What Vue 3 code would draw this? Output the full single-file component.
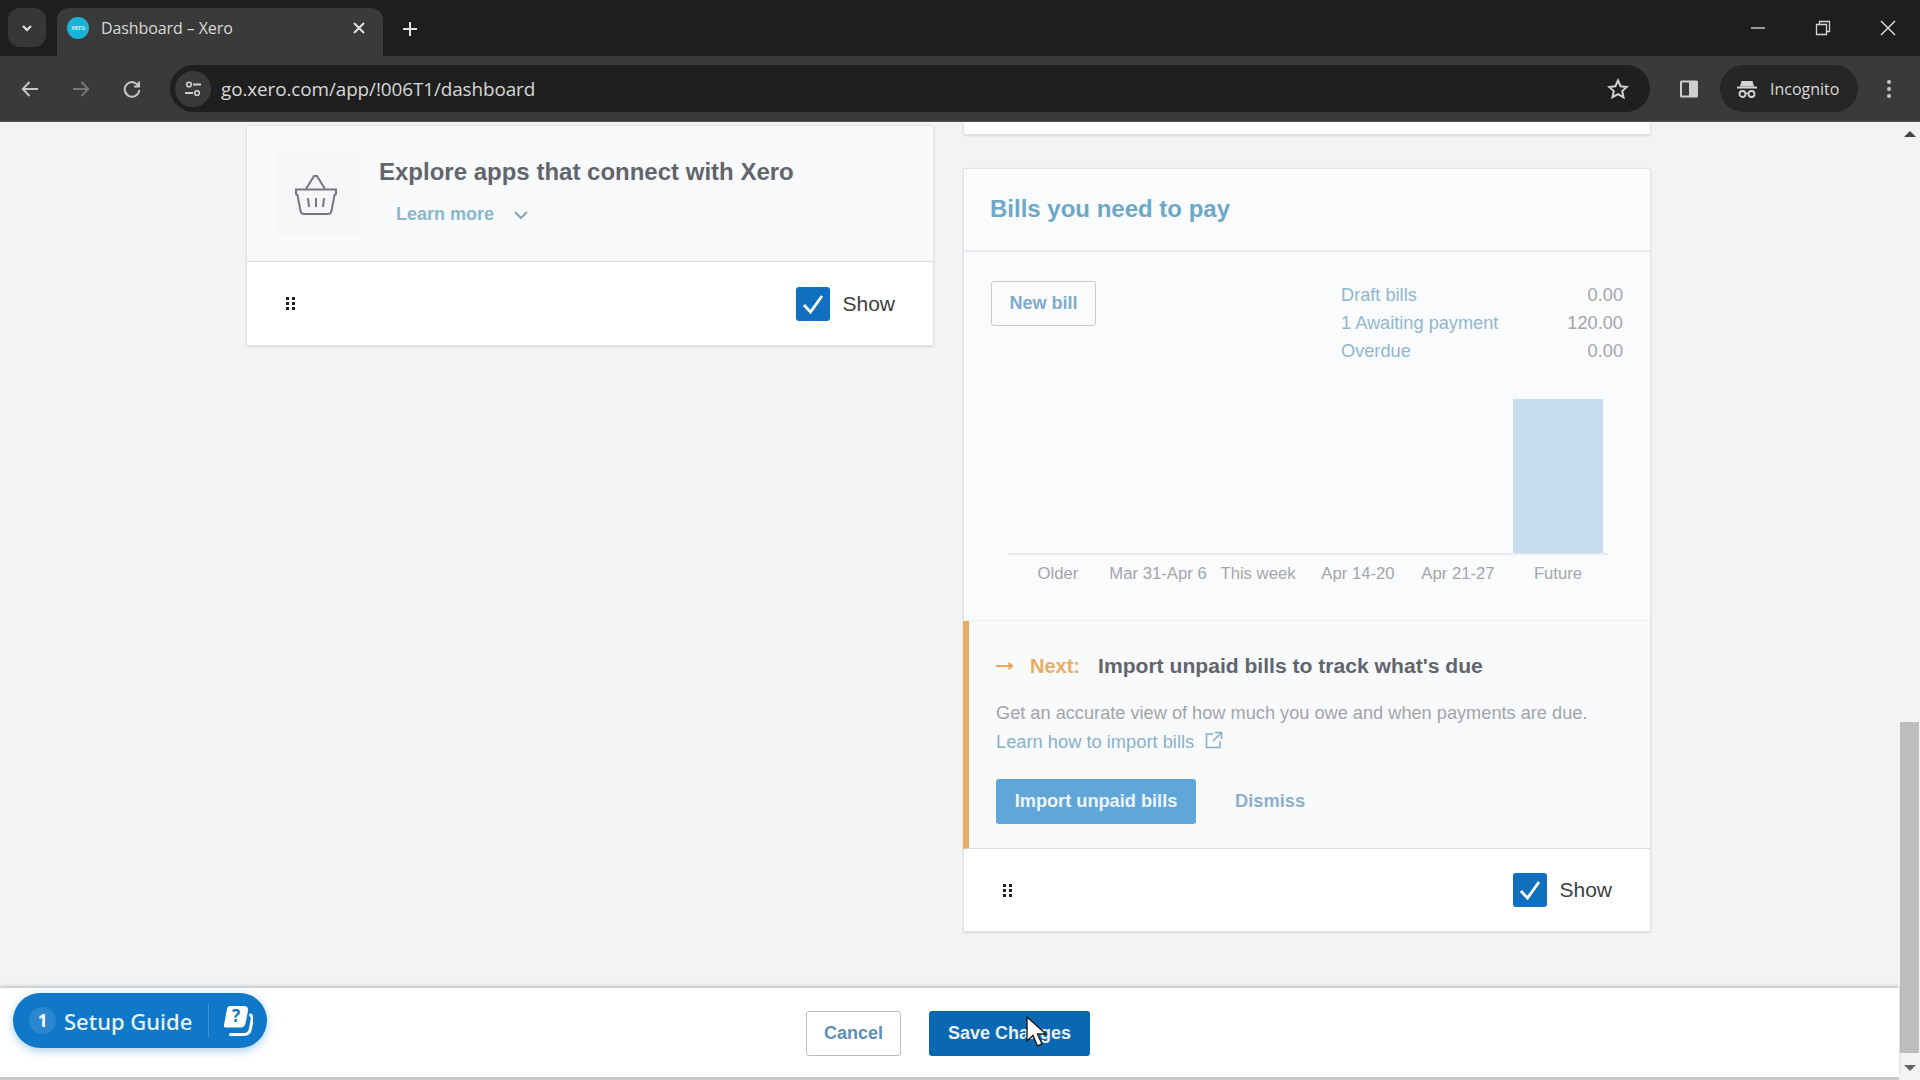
<template>
  <div class="page">
    <div class="tabstrip">
      <button class="tab-menu">
        <svg width="14" height="14" viewBox="0 0 14 14"><path d="M3 5l4 4 4-4" fill="none" stroke="#e4e4e4" stroke-width="2" /></svg>
      </button>
      <div class="tab">
        <span class="favicon">xero</span>
        <span class="tab-title">Dashboard – Xero</span>
        <svg class="tab-close" width="14" height="14" viewBox="0 0 14 14"><path d="M2 2l10 10M12 2L2 12" stroke="#e2e2e2" stroke-width="2" /></svg>
      </div>
      <svg class="tab-new" width="18" height="18" viewBox="0 0 18 18"><path d="M9 2v14M2 9h14" stroke="#e2e2e2" stroke-width="2" /></svg>
      <div class="win-btns">
        <svg width="16" height="16" viewBox="0 0 16 16"><path d="M1 8h14" stroke="#cfcfcf" stroke-width="1.4" /></svg>
        <svg width="16" height="16" viewBox="0 0 16 16"><path d="M1.5 4.5h10v10h-10zM4.5 4V1.5h10v10H12" fill="none" stroke="#d5d5d5" stroke-width="1.3" /></svg>
        <svg width="16" height="16" viewBox="0 0 16 16"><path d="M1 1l14 14M15 1L1 15" stroke="#e4e4e4" stroke-width="1.4" /></svg>
      </div>
    </div>

    <div class="toolbar">
      <svg class="nav-icon" width="20" height="20" viewBox="0 0 20 20"><path d="M18 10H3M9.5 3L2.800 10l6.700 7" fill="none" stroke="#c6c6c6" stroke-width="2" /></svg>
      <svg class="nav-icon" width="20" height="20" viewBox="0 0 20 20"><path d="M2 10h15M10.500 3l6.700 7-6.700 7" fill="none" stroke="#777" stroke-width="2" /></svg>
      <svg class="nav-icon" width="20" height="20" viewBox="0 0 20 20"><path d="M16.500 7A7.300 7.300 0 1 0 17.300 11M17 2.500V7.500H12" fill="none" stroke="#c6c6c6" stroke-width="2" /></svg>
      <div class="omnibox">
        <span class="site-btn">
          <svg width="20" height="20" viewBox="0 0 20 20">
            <circle cx="6" cy="5.500" r="2.300" fill="none" stroke="#d2d2d2" stroke-width="1.600" />
            <path d="M10 5.500h8M2 14h8" stroke="#d2d2d2" stroke-width="1.800" />
            <circle cx="14" cy="14" r="2.300" fill="none" stroke="#d2d2d2" stroke-width="1.600" />
          </svg>
        </span>
        <span class="url">go.xero.com/app/!006T1/dashboard</span>
        <svg class="star" width="22" height="22" viewBox="0 0 22 22"><path d="M11 2.500l2.600 5.700 6.200.7-4.600 4.200 1.300 6.100L11 16.100l-5.500 3.100 1.300-6.100-4.600-4.200 6.200-.7z" fill="none" stroke="#d0d0d0" stroke-width="2" /></svg>
      </div>
      <svg class="side-panel" width="20" height="20" viewBox="0 0 20 20"><rect x="1" y="1.500" width="18" height="17" rx="1.500" fill="#cfcfcf" /><rect x="3" y="3.500" width="7" height="13" fill="#3a3a3a" /></svg>
      <div class="incognito">
        <svg width="22" height="22" viewBox="0 0 22 22">
          <path d="M5.500 3h11l1.500 5.500H4z" fill="#d5d5d5" />
          <path d="M1 9.500h20" stroke="#d5d5d5" stroke-width="2" />
          <circle cx="6.500" cy="16" r="3" fill="none" stroke="#d5d5d5" stroke-width="1.800" />
          <circle cx="15.500" cy="16" r="3" fill="none" stroke="#d5d5d5" stroke-width="1.800" />
          <path d="M9.500 15.500h3" stroke="#d5d5d5" stroke-width="1.500" />
        </svg>
        <span>Incognito</span>
      </div>
      <svg class="dots" width="6" height="22" viewBox="0 0 6 22"><circle cx="3" cy="4" r="2" fill="#c8c8c8" /><circle cx="3" cy="11" r="2" fill="#c8c8c8" /><circle cx="3" cy="18" r="2" fill="#c8c8c8" /></svg>
    </div>

    <div class="viewport">
      <div class="main">
        <div class="board">
          <div class="col">
            <section class="card apps-card">
              <div class="apps-head">
                <div class="basket-tile">
                  <svg width="46" height="44" viewBox="0 0 46 44" fill="none" stroke="#74777c" stroke-width="2">
                    <path d="M13 16L21 3h3l8 13" />
                    <path d="M3 16.500h40v4c0 1-1 1.500-1.500 1.500L38.500 38c-.4 2-1.500 3-3.500 3H11c-2 0-3.100-1-3.500-3L4.500 22C4 22 3 21.500 3 20.500z" />
                    <path d="M15 25l1 9M23 25v9M31 25l-1 9" />
                  </svg>
                </div>
                <div class="apps-text">
                  <h3 class="apps-title">Explore apps that connect with Xero</h3>
                  <a class="learn-more">
                    Learn more
                    <svg width="16" height="10" viewBox="0 0 16 10"><path d="M2 2l6 6 6-6" fill="none" stroke="#84a9be" stroke-width="2.200" /></svg>
                  </a>
                </div>
              </div>
              <div class="card-foot">
                <span class="grip"><i v-for="n in 6" :key="n"></i></span>
                <label class="show">
                  <span class="check">
                    <svg width="24" height="22" viewBox="0 0 24 22"><path d="M3 12l6.500 7L21 3" fill="none" stroke="#fff" stroke-width="2.800" /></svg>
                  </span>
                  Show
                </label>
              </div>
            </section>
          </div>

          <div class="col">
            <div class="card prev-card"></div>
            <section class="card bills-card">
              <div class="bills-head">
                <h3 class="bills-title">Bills you need to pay</h3>
              </div>
              <div class="bills-body">
                <div class="bills-top">
                  <button class="new-bill">New bill</button>
                  <div class="summary">
                    <div v-for="row in summary" :key="row.label" class="summary-row">
                      <span class="summary-label">{{ row.label }}</span>
                      <span class="summary-value">{{ row.value }}</span>
                    </div>
                  </div>
                </div>
                <div class="chart">
                  <div class="plot">
                    <div v-for="col in chart" :key="col.label" class="plot-col">
                      <div class="bar" :style="{ height: col.height + 'px' }"></div>
                    </div>
                  </div>
                  <div class="axis-labels">
                    <span v-for="col in chart" :key="col.label">{{ col.label }}</span>
                  </div>
                </div>
              </div>
              <div class="next">
                <div class="next-title">
                  <svg width="18" height="12" viewBox="0 0 18 12"><path d="M0 6h16M12.500 3l3.500 3-3.500 3" fill="none" stroke="#e9a65c" stroke-width="2.200" /></svg>
                  <span class="next-word">Next:</span>
                  <span class="next-text">Import unpaid bills to track what's due</span>
                </div>
                <p class="next-desc">Get an accurate view of how much you owe and when payments are due.</p>
                <a class="next-link">
                  Learn how to import bills
                  <svg width="18" height="18" viewBox="0 0 18 18" fill="none" stroke="#84aec8" stroke-width="1.500"><path d="M8 3H1.500v13.500H15V10M10 1.500h6.500V8M16.500 1.500L8 10" /></svg>
                </a>
                <div class="next-actions">
                  <button class="import-btn">Import unpaid bills</button>
                  <a class="dismiss">Dismiss</a>
                </div>
              </div>
              <div class="card-foot bills-foot">
                <span class="grip"><i v-for="n in 6" :key="n"></i></span>
                <label class="show">
                  <span class="check">
                    <svg width="24" height="22" viewBox="0 0 24 22"><path d="M3 12l6.500 7L21 3" fill="none" stroke="#fff" stroke-width="2.800" /></svg>
                  </span>
                  Show
                </label>
              </div>
            </section>
          </div>
        </div>

        <div class="save-bar">
          <button class="cancel">Cancel</button>
          <button class="save">Save Changes</button>
        </div>
        <div class="below"></div>
      </div>

      <div class="scrollbar">
        <svg class="arrow" width="16" height="8" viewBox="0 0 16 8"><path d="M8 1l6 6H2z" fill="#444" /></svg>
        <div class="track"><div class="thumb"></div></div>
        <svg class="arrow" width="16" height="8" viewBox="0 0 16 8"><path d="M2 1h12L8 7z" fill="#666" /></svg>
      </div>

      <div class="setup-guide">
        <span class="setup-count">1</span>
        <span class="setup-label">Setup Guide</span>
        <span class="setup-sep"></span>
        <svg width="30" height="32" viewBox="0 0 30 32">
          <path d="M7 1h14c3 0 4.500 2 4 4.500l-2.500 13c-.5 2.500-2.500 4-5 4H3c-1.500 0-2.500-1-2-2.500L4 4c.4-2 1.500-3 3-3z" fill="#fff" />
          <text x="13" y="17" text-anchor="middle" class="setup-q">?</text>
          <path d="M27.500 10c1.500 1 2 2.500 1.600 4.500l-1.500 8.500C27 27 24.500 29.500 21 29.500H7.500" fill="none" stroke="#fff" stroke-width="3" stroke-linecap="round" />
        </svg>
      </div>

      <svg class="cursor" width="26" height="34" viewBox="0 0 26 34">
        <path d="M2 1v24l6-5.500 4.500 10.500 4.500-2-4.500-10H21z" fill="#fff" stroke="#1c1c1c" stroke-width="1.400" />
      </svg>
    </div>
  </div>
</template>

<script setup>
const summary = [
  { label: 'Draft bills', value: '0.00' },
  { label: '1 Awaiting payment', value: '120.00' },
  { label: 'Overdue', value: '0.00' },
]

const chart = [
  { label: 'Older', height: 0 },
  { label: 'Mar 31-Apr 6', height: 0 },
  { label: 'This week', height: 0 },
  { label: 'Apr 14-20', height: 0 },
  { label: 'Apr 21-27', height: 0 },
  { label: 'Future', height: 154 },
]
</script>

<style>
html,
body {
  margin: 0;
  overflow: hidden;
}
</style>

<style scoped>
* {
  box-sizing: border-box;
}
.page {
  width: 1920px;
  height: 1080px;
  display: flex;
  flex-direction: column;
  position: relative;
  overflow: hidden;
  font-family: "Liberation Sans", Arial, sans-serif;
  background: #f2f3f5;
}
h3,
p {
  margin: 0;
}
button {
  font-family: inherit;
  cursor: pointer;
}

/* browser chrome */
.tabstrip {
  height: 56px;
  flex: none;
  background: #1e1e1e;
  display: flex;
  align-items: flex-end;
  padding-left: 8px;
}
.tab-menu {
  width: 38px;
  height: 39px;
  margin-bottom: 9px;
  background: #373737;
  border: 0;
  border-radius: 12px;
  display: flex;
  align-items: center;
  justify-content: center;
  padding: 0;
}
.tab {
  width: 326px;
  height: 48px;
  margin-left: 11px;
  background: #3a3a3a;
  border-radius: 12px 12px 0 0;
  display: flex;
  align-items: center;
  padding: 0 17px 8px 10px;
  color: #d9d9d9;
}
.favicon {
  width: 22px;
  height: 22px;
  border-radius: 50%;
  background: #1ab4d7;
  color: #fff;
  font-size: 7px;
  line-height: 22px;
  text-align: center;
  flex: none;
}
.tab-title {
  margin-left: 12px;
  font-family: "Open Sans", sans-serif;
  font-size: 16px;
  letter-spacing: -0.1px;
  flex: 1;
}
.tab-new {
  margin: 0 0 18px 18px;
}
.win-btns {
  margin-left: auto;
  width: 170px;
  display: flex;
  justify-content: space-between;
  align-items: center;
  padding: 0 24px 0 0;
  margin-bottom: 20px;
}
.toolbar {
  height: 66px;
  flex: none;
  background: #3a3a3a;
  display: flex;
  align-items: center;
  padding-left: 20px;
  border-bottom: 1px solid #555;
}
.nav-icon {
  margin-right: 31px;
}
.omnibox {
  width: 1480px;
  height: 47px;
  margin-left: -3px;
  background: #1f1f1f;
  border-radius: 24px;
  display: flex;
  align-items: center;
  padding: 0 21px 0 5px;
}
.site-btn {
  width: 36px;
  height: 36px;
  border-radius: 50%;
  background: #3a3a3a;
  display: flex;
  align-items: center;
  justify-content: center;
}
.url {
  margin-left: 10px;
  font-family: "Open Sans", sans-serif;
  font-size: 18.900px;
  letter-spacing: -0.1px;
  color: #d8d8d8;
}
.star {
  margin-left: auto;
}
.side-panel {
  margin-left: 29px;
}
.incognito {
  width: 138px;
  height: 47px;
  margin-left: 21px;
  background: #262626;
  border-radius: 24px;
  display: flex;
  align-items: center;
  padding-left: 16px;
  gap: 12px;
  font-family: "Open Sans", sans-serif;
  font-size: 16px;
  color: #d8d8d8;
}
.dots {
  margin-left: 28px;
}

/* page */
.viewport {
  flex: 1;
  display: flex;
  min-height: 0;
  position: relative;
}
.main {
  flex: 1;
  min-width: 0;
  display: flex;
  flex-direction: column;
}
.board {
  flex: 1;
  min-height: 0;
  overflow: hidden;
  display: grid;
  grid-template-columns: 688px 688px;
  column-gap: 29px;
  padding-left: 246px;
  align-items: start;
}
.col {
  display: flex;
  flex-direction: column;
}
.card {
  background: #fff;
  border: 1px solid #e1e3e6;
  box-shadow: 0 1px 2px rgba(0, 0, 0, 0.12);
  border-radius: 2px;
}

/* apps card */
.apps-card {
  margin-top: 3px;
}
.apps-head {
  height: 136px;
  background: #f9fafc;
  border-bottom: 1px solid #d9dbdf;
  display: flex;
  padding: 25px 0 0 30px;
}
.basket-tile {
  width: 84px;
  height: 85px;
  background: #f5f6f8;
  border-radius: 4px;
  display: flex;
  align-items: center;
  justify-content: center;
  padding: 2px 7px 0 0;
}
.apps-text {
  padding-left: 18px;
}
.apps-title {
  font-size: 24px;
  line-height: 30px;
  color: #62656c;
  font-weight: 700;
  margin-top: 6px;
}
.learn-more {
  display: flex;
  align-items: center;
  gap: 19px;
  margin: 17px 0 0 17px;
  font-size: 18px;
  font-weight: 700;
  color: #8ab7ce;
}
.card-foot {
  height: 83px;
  background: #fff;
  display: flex;
  align-items: center;
  justify-content: space-between;
  padding: 0 38px 0 39px;
}
.bills-foot {
  height: 82px;
}
.grip {
  width: 9px;
  display: grid;
  grid-template-columns: 3px 3px;
  column-gap: 3px;
  row-gap: 2px;
}
.grip i {
  height: 3px;
  background: #222;
}
.show {
  display: flex;
  align-items: center;
  gap: 12px;
  font-size: 21px;
  color: #3d3f44;
}
.check {
  width: 34px;
  height: 34px;
  background: #1070bf;
  border-radius: 3px;
  display: flex;
  align-items: center;
  justify-content: center;
}

/* bills card */
.prev-card {
  height: 13px;
  border-top: 0;
  margin-bottom: 33px;
}
.bills-head {
  height: 83px;
  background: #fafbfd;
  border-bottom: 2px solid #e8eaed;
  padding: 25px 0 0 26px;
}
.bills-title {
  font-size: 24px;
  line-height: 30px;
  color: #6ea8c8;
}
.bills-body {
  height: 369px;
  background: #fafbfc;
  border-bottom: 1px solid #eeeff1;
}
.bills-top {
  display: flex;
  justify-content: space-between;
  padding: 29px 27px 0 27px;
}
.new-bill {
  width: 105px;
  height: 45px;
  background: #fafbfc;
  border: 1px solid #c9cbcf;
  border-radius: 3px;
  font-size: 18px;
  font-weight: 700;
  color: #7eaccb;
  padding: 0;
}
.summary {
  width: 282px;
}
.summary-row {
  height: 28px;
  display: flex;
  justify-content: space-between;
  align-items: center;
  font-size: 18.200px;
}
.summary-label {
  color: #91b7cf;
}
.summary-value {
  color: #a3a6ab;
}
.chart {
  margin: 36px 0 0 44px;
  width: 600px;
}
.plot {
  height: 154px;
  border-bottom: 2px solid #e9ebee;
  display: flex;
  align-items: flex-end;
}
.plot-col {
  flex: 1;
  display: flex;
  justify-content: center;
}
.bar {
  width: 90px;
  background: #c6dbef;
}
.axis-labels {
  display: flex;
  margin-top: 9px;
}
.axis-labels span {
  flex: 1;
  text-align: center;
  font-size: 16.700px;
  white-space: nowrap;
  color: #a4a6aa;
}

/* next section */
.next {
  height: 228px;
  margin-left: -1px;
  background: #f9fafc;
  border-left: 6px solid #ebaa60;
  border-bottom: 1px solid #d9dbdf;
  padding: 33px 0 0 27px;
}
.next-title {
  display: flex;
  align-items: center;
  font-size: 20px;
  line-height: 24px;
  font-weight: 700;
}
.next-word {
  color: #e9ad66;
  margin-left: 16px;
}
.next-text {
  color: #62656c;
  font-size: 21.100px;
  margin-left: 18px;
}
.next-desc {
  margin-top: 23px;
  font-size: 18.200px;
  line-height: 24px;
  color: #a2a4a9;
}
.next-link {
  display: flex;
  align-items: center;
  gap: 11px;
  height: 33px;
  font-size: 18.300px;
  color: #88b1cb;
}
.next-link svg {
  margin-top: -3px;
}
.next-actions {
  display: flex;
  align-items: center;
  margin-top: 21px;
}
.import-btn {
  width: 200px;
  height: 45px;
  background: #61a6d8;
  border: 0;
  border-radius: 3px;
  color: #eef5fb;
  font-size: 18.200px;
  font-weight: 700;
  padding: 0;
}
.dismiss {
  margin: -1px 0 0 39px;
  font-size: 18.300px;
  font-weight: 700;
  color: #89b0cc;
}

/* save bar */
.save-bar {
  height: 89px;
  flex: none;
  background: #fff;
  box-shadow: 0 -2px 3px rgba(0, 0, 0, 0.18);
  display: flex;
  align-items: center;
  padding: 1px 0 0 806px;
  gap: 28px;
  position: relative;
}
.cancel {
  width: 95px;
  height: 45px;
  background: #fff;
  border: 1px solid #bcbdc0;
  border-radius: 3px;
  font-size: 18px;
  font-weight: 700;
  color: #5d8fb7;
  padding: 0;
}
.save {
  width: 161px;
  height: 45px;
  background: #0a68b2;
  border: 0;
  border-radius: 3px;
  font-size: 18px;
  font-weight: 700;
  color: #e9f1f8;
  padding: 0;
}
.below {
  height: 3px;
  flex: none;
  background: #c9cacc;
}

/* scrollbar */
.scrollbar {
  width: 21px;
  flex: none;
  background: #f3f3f3;
  display: flex;
  flex-direction: column;
  align-items: center;
}
.arrow {
  flex: none;
  margin: 8px 0;
}
.track {
  flex: 1;
  width: 100%;
  padding-top: 576px;
}
.thumb {
  width: 19px;
  height: 331px;
  margin-left: 1px;
  background: #bdbdbd;
}

/* overlays */
.setup-guide {
  position: absolute;
  left: 13px;
  top: 871px;
  width: 254px;
  height: 55px;
  border-radius: 28px;
  background: #0f78c8;
  box-shadow: 0 3px 10px rgba(15, 120, 200, 0.35);
  display: flex;
  align-items: center;
  padding-left: 16px;
  color: #e6f2fb;
}
.setup-count {
  width: 27px;
  height: 27px;
  border-radius: 50%;
  background: #2a86cf;
  text-align: center;
  line-height: 27px;
  font-family: "Noto Sans", sans-serif;
  font-size: 17px;
  font-weight: 700;
  color: #fff;
}
.setup-label {
  margin-left: 8px;
  font-family: "Noto Sans", sans-serif;
  font-size: 22px;
  font-weight: 500;
}
.setup-sep {
  width: 1px;
  height: 34px;
  background: #3f93d5;
  margin: 0 14px 0 16px;
}
.setup-q {
  font-family: "Noto Sans", sans-serif;
  font-size: 17px;
  font-weight: 700;
  fill: #0f78c8;
}
.cursor {
  position: absolute;
  left: 1025px;
  top: 894px;
}
</style>
